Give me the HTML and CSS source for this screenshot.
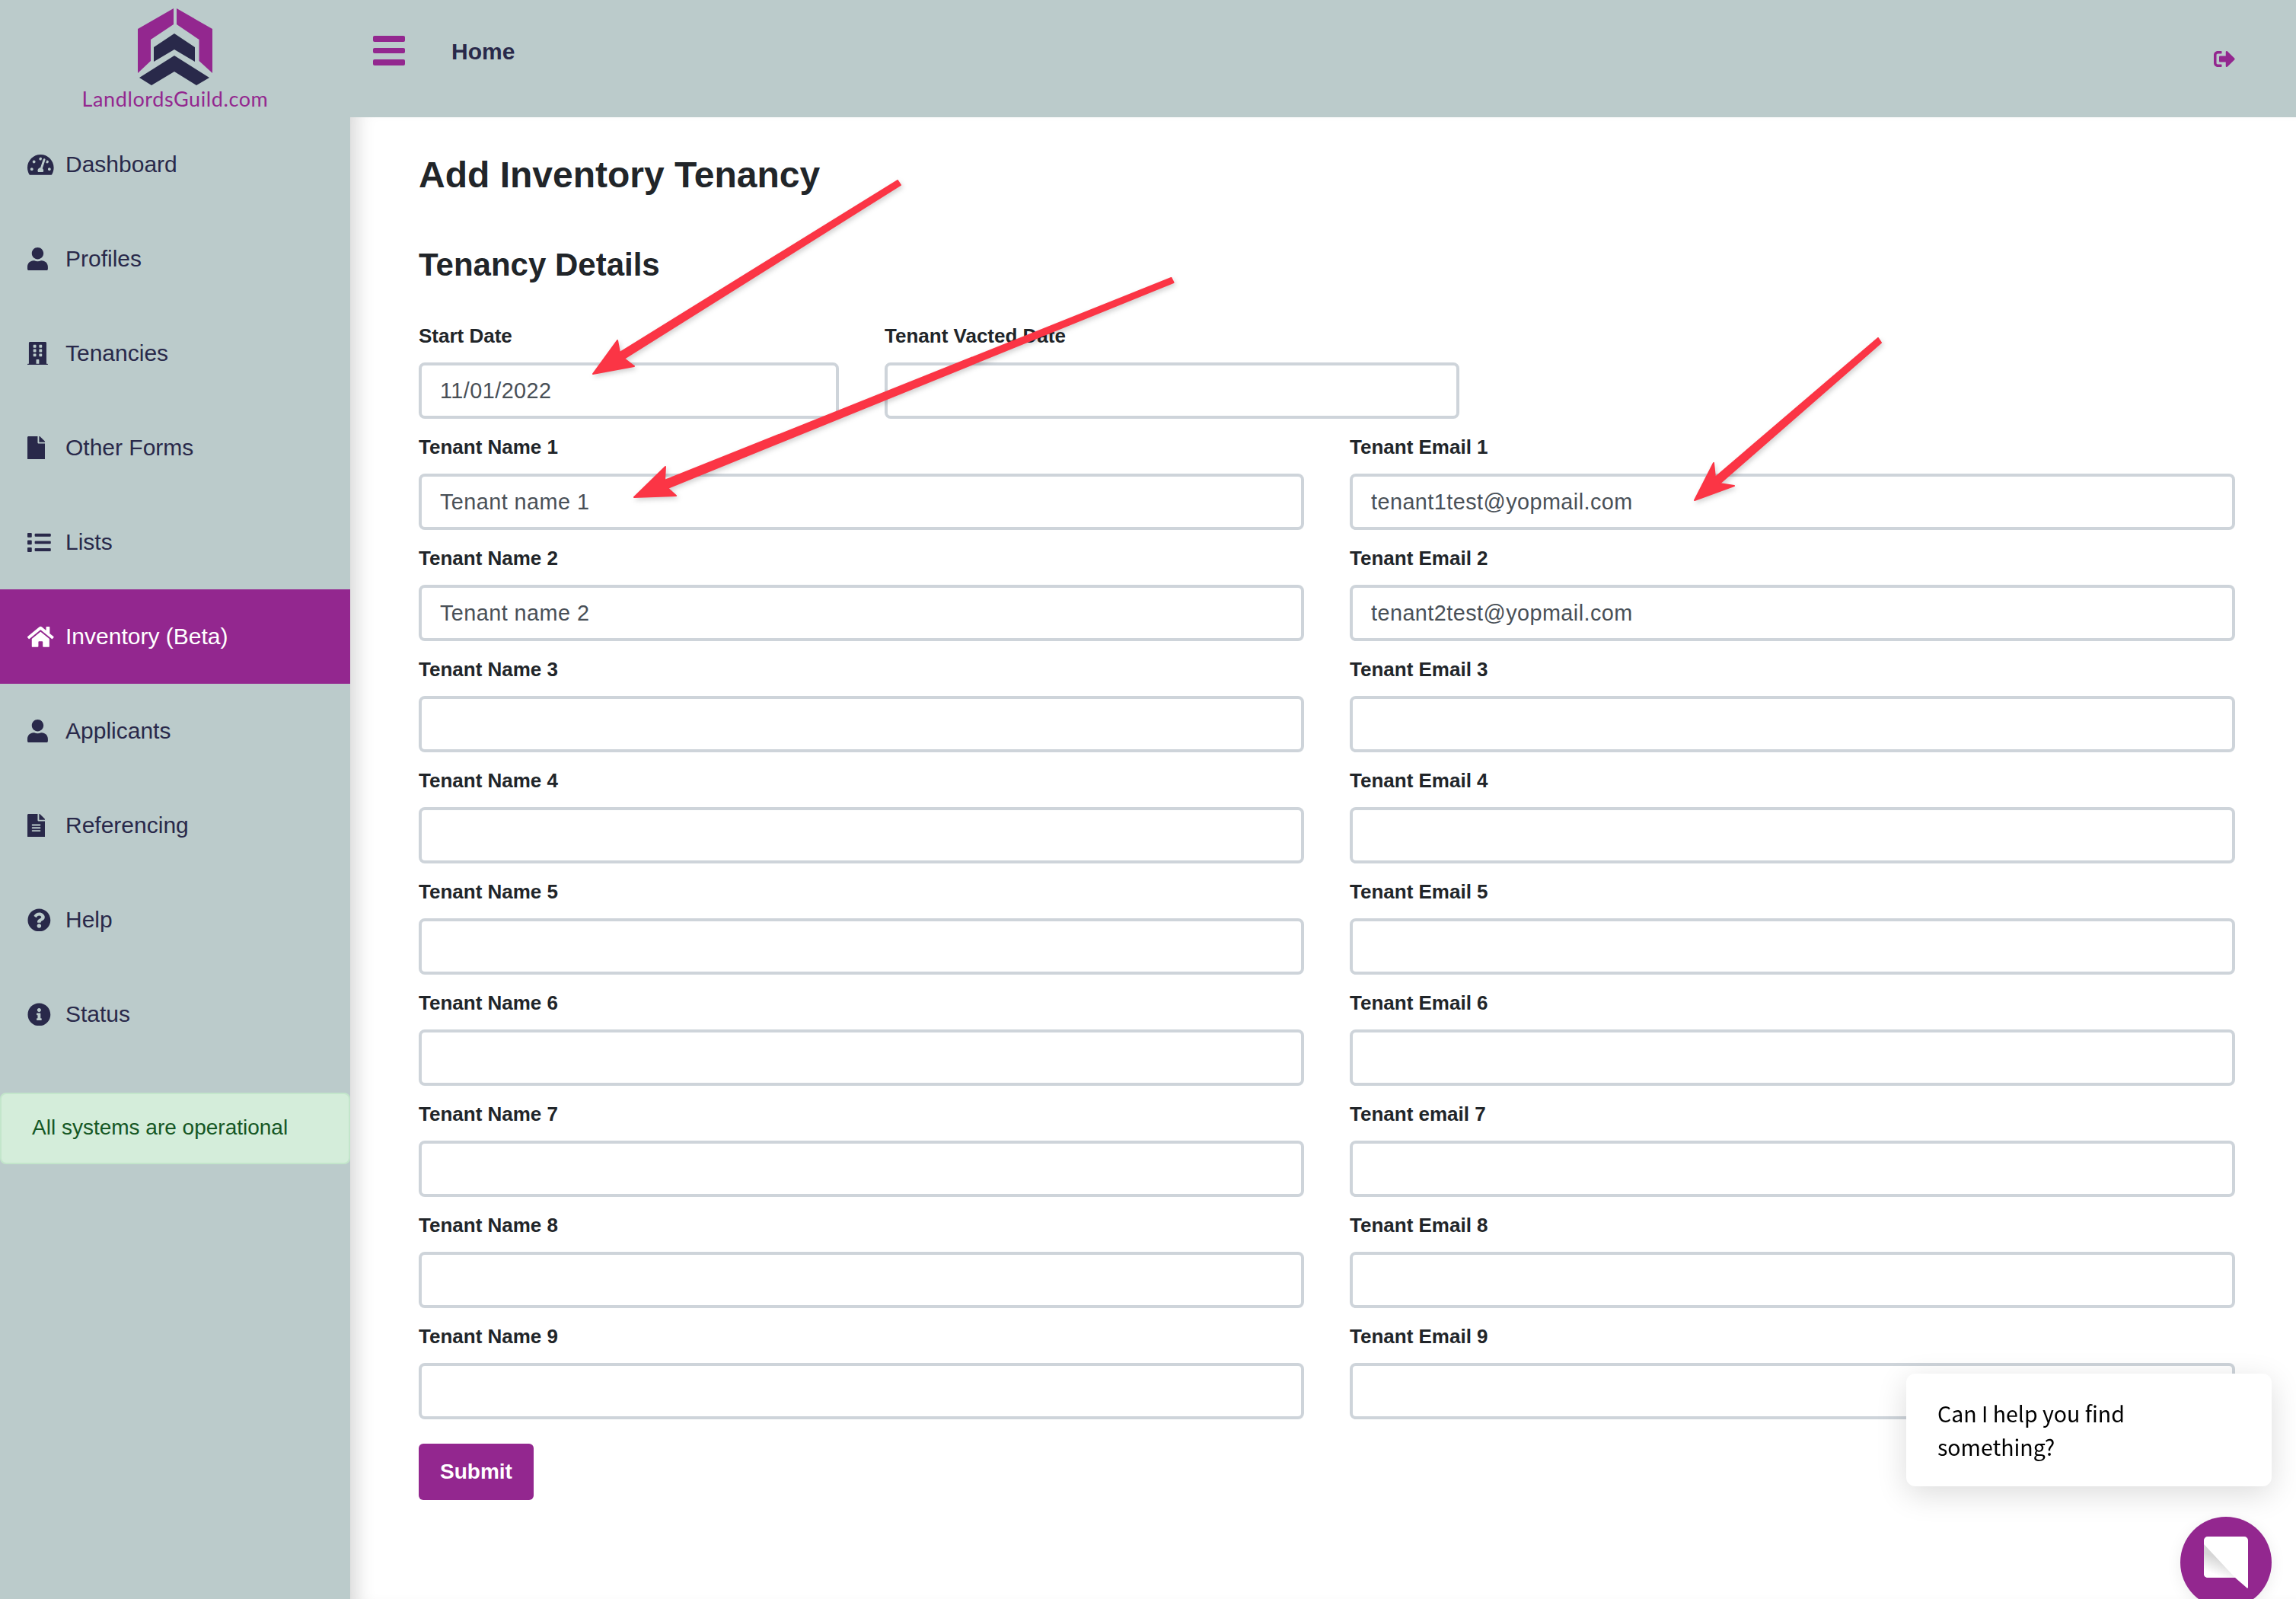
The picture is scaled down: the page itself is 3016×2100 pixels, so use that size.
FILE: index.html
```html
<!DOCTYPE html>
<html>
<head>
<meta charset="utf-8">
<title>Add Inventory Tenancy</title>
<link rel="stylesheet" href="styles.css">
</head>
<body>
<div class="app">

<aside class="sidebar">
  <div class="logo">
    <svg class="logo-mark" viewBox="182 11 98 101">
      <polygon class="purple" points="229,11 229,32 199,52 199,80 182,96 182,38"/>
      <polygon class="purple" points="233,11 233,32 262.5,52 262.5,80 280,96 280,38"/>
      <polygon class="navy" points="230,44 257,62 257,81 230,65 203,81 203,62"/>
      <polygon class="navy" points="230,73 276,102 259,112 230,94 200,112 184,102"/>
    </svg>
    <div class="logo-text">LandlordsGuild.com</div>
  </div>

  <nav class="nav">
    <a class="nav-item"><span class="nav-icon"><svg viewBox="0 0 576 512"><path d="M288 32C128.94 32 0 160.94 0 320c0 52.8 14.25 102.26 39.06 144.8 5.61 9.62 16.3 15.2 27.44 15.2h443c11.14 0 21.83-5.58 27.44-15.2C561.75 422.26 576 372.8 576 320c0-159.06-128.94-288-288-288zm0 64c14.71 0 26.58 10.13 30.32 23.65-1.11 2.26-2.64 4.23-3.45 6.67l-9.22 27.67c-5.13 3.49-10.97 6.01-17.64 6.01-17.67 0-32-14.33-32-32S270.33 96 288 96zM96 384c-17.67 0-32-14.33-32-32s14.33-32 32-32 32 14.33 32 32-14.33 32-32 32zm48-160c-17.67 0-32-14.33-32-32s14.33-32 32-32 32 14.33 32 32-14.33 32-32 32zm246.77-72.41l-61.33 184C343.13 347.33 352 364.54 352 384c0 11.72-3.38 22.55-8.88 32H232.88c-5.5-9.45-8.88-20.28-8.88-32 0-33.94 26.5-61.43 59.9-63.59l61.34-184.01c4.17-12.56 17.73-19.45 30.36-15.17 12.57 4.19 19.35 17.79 15.17 30.36zm14.66 57.2l15.52-46.55c3.47-1.29 7.13-2.23 11.05-2.23 17.67 0 32 14.33 32 32s-14.33 32-32 32c-11.38-.01-20.89-6.28-26.57-15.22zM480 384c-17.67 0-32-14.33-32-32s14.33-32 32-32 32 14.33 32 32-14.33 32-32 32z"/></svg></span>Dashboard</a>
    <a class="nav-item"><span class="nav-icon"><svg viewBox="0 0 448 512"><path d="M224 256c70.7 0 128-57.3 128-128S294.7 0 224 0 96 57.3 96 128s57.3 128 128 128zm89.6 32h-16.7c-22.2 10.2-46.9 16-72.9 16s-50.6-5.8-72.9-16h-16.7C60.2 288 0 348.2 0 422.4V464c0 26.5 21.5 48 48 48h352c26.5 0 48-21.5 48-48v-41.6c0-74.2-60.2-134.4-134.4-134.4z"/></svg></span>Profiles</a>
    <a class="nav-item"><span class="nav-icon"><svg viewBox="0 0 448 512"><path d="M436 480h-20V24c0-13.255-10.745-24-24-24H56C42.745 0 32 10.745 32 24v456H12c-6.627 0-12 5.373-12 12v20h448v-20c0-6.627-5.373-12-12-12zM128 76c0-6.627 5.373-12 12-12h40c6.627 0 12 5.373 12 12v40c0 6.627-5.373 12-12 12h-40c-6.627 0-12-5.373-12-12V76zm0 96c0-6.627 5.373-12 12-12h40c6.627 0 12 5.373 12 12v40c0 6.627-5.373 12-12 12h-40c-6.627 0-12-5.373-12-12v-40zm52 148h-40c-6.627 0-12-5.373-12-12v-40c0-6.627 5.373-12 12-12h40c6.627 0 12 5.373 12 12v40c0 6.627-5.373 12-12 12zm76 160h-64v-84c0-6.627 5.373-12 12-12h40c6.627 0 12 5.373 12 12v84zm64-172c0 6.627-5.373 12-12 12h-40c-6.627 0-12-5.373-12-12v-40c0-6.627 5.373-12 12-12h40c6.627 0 12 5.373 12 12v40zm0-96c0 6.627-5.373 12-12 12h-40c-6.627 0-12-5.373-12-12v-40c0-6.627 5.373-12 12-12h40c6.627 0 12 5.373 12 12v40zm0-96c0 6.627-5.373 12-12 12h-40c-6.627 0-12-5.373-12-12V76c0-6.627 5.373-12 12-12h40c6.627 0 12 5.373 12 12v40z"/></svg></span>Tenancies</a>
    <a class="nav-item"><span class="nav-icon"><svg viewBox="0 0 384 512"><path d="M224 136V0H24C10.7 0 0 10.7 0 24v464c0 13.3 10.7 24 24 24h336c13.3 0 24-10.7 24-24V160H248c-13.2 0-24-10.8-24-24zm160-14.1v6.1H256V0h6.1c6.4 0 12.5 2.5 17 7l97.9 98c4.5 4.5 7 10.6 7 16.9z"/></svg></span>Other Forms</a>
    <a class="nav-item"><span class="nav-icon"><svg viewBox="0 0 512 512"><path d="M80 368H16a16 16 0 0 0-16 16v64a16 16 0 0 0 16 16h64a16 16 0 0 0 16-16v-64a16 16 0 0 0-16-16zm0-320H16A16 16 0 0 0 0 64v64a16 16 0 0 0 16 16h64a16 16 0 0 0 16-16V64a16 16 0 0 0-16-16zm0 160H16a16 16 0 0 0-16 16v64a16 16 0 0 0 16 16h64a16 16 0 0 0 16-16v-64a16 16 0 0 0-16-16zm416 176H176a16 16 0 0 0-16 16v32a16 16 0 0 0 16 16h320a16 16 0 0 0 16-16v-32a16 16 0 0 0-16-16zm0-320H176a16 16 0 0 0-16 16v32a16 16 0 0 0 16 16h320a16 16 0 0 0 16-16V80a16 16 0 0 0-16-16zm0 160H176a16 16 0 0 0-16 16v32a16 16 0 0 0 16 16h320a16 16 0 0 0 16-16v-32a16 16 0 0 0-16-16z"/></svg></span>Lists</a>
    <a class="nav-item active"><span class="nav-icon"><svg viewBox="0 0 576 512"><path d="M280.37 148.26L96 300.11V464a16 16 0 0 0 16 16l112.06-.29a16 16 0 0 0 15.92-16V368a16 16 0 0 1 16-16h64a16 16 0 0 1 16 16v95.64a16 16 0 0 0 16 16.05L464 480a16 16 0 0 0 16-16V300L295.67 148.26a12.19 12.19 0 0 0-15.3 0zM571.6 251.47L488 182.56V44.05a12 12 0 0 0-12-12h-56a12 12 0 0 0-12 12v72.61L318.47 43a48 48 0 0 0-61 0L4.34 251.47a12 12 0 0 0-1.6 16.9l25.5 31A12 12 0 0 0 45.15 301l235.22-193.74a12.19 12.19 0 0 1 15.3 0L530.9 301a12 12 0 0 0 16.9-1.6l25.5-31a12 12 0 0 0-1.7-16.93z"/></svg></span>Inventory (Beta)</a>
    <a class="nav-item"><span class="nav-icon"><svg viewBox="0 0 448 512"><path d="M224 256c70.7 0 128-57.3 128-128S294.7 0 224 0 96 57.3 96 128s57.3 128 128 128zm89.6 32h-16.7c-22.2 10.2-46.9 16-72.9 16s-50.6-5.8-72.9-16h-16.7C60.2 288 0 348.2 0 422.4V464c0 26.5 21.5 48 48 48h352c26.5 0 48-21.5 48-48v-41.6c0-74.2-60.2-134.4-134.4-134.4z"/></svg></span>Applicants</a>
    <a class="nav-item"><span class="nav-icon"><svg viewBox="0 0 384 512"><path d="M224 136V0H24C10.7 0 0 10.7 0 24v464c0 13.3 10.7 24 24 24h336c13.3 0 24-10.7 24-24V160H248c-13.2 0-24-10.8-24-24zm64 236c0 6.6-5.4 12-12 12H108c-6.6 0-12-5.4-12-12v-8c0-6.6 5.4-12 12-12h168c6.6 0 12 5.4 12 12v8zm0-64c0 6.6-5.4 12-12 12H108c-6.6 0-12-5.4-12-12v-8c0-6.6 5.4-12 12-12h168c6.6 0 12 5.4 12 12v8zm0-72v8c0 6.6-5.4 12-12 12H108c-6.6 0-12-5.4-12-12v-8c0-6.6 5.4-12 12-12h168c6.6 0 12 5.4 12 12zm96-114.1v6.1H256V0h6.1c6.4 0 12.5 2.5 17 7l97.9 98c4.5 4.5 7 10.6 7 16.9z"/></svg></span>Referencing</a>
    <a class="nav-item"><span class="nav-icon"><svg viewBox="0 0 512 512"><path d="M504 256c0 136.997-111.043 248-248 248S8 392.997 8 256C8 119.083 119.043 8 256 8s248 111.083 248 248zM262.655 90c-54.497 0-89.255 22.957-116.549 63.758-3.536 5.286-2.353 12.415 2.715 16.258l34.699 26.31c5.205 3.947 12.621 3.008 16.665-2.122 17.864-22.658 30.113-35.797 57.303-35.797 20.429 0 45.698 13.148 45.698 32.958 0 14.976-12.363 22.667-32.534 33.976C247.128 238.528 216 254.941 216 296v4c0 6.627 5.373 12 12 12h56c6.627 0 12-5.373 12-12v-1.333c0-28.462 83.186-29.647 83.186-106.667 0-58.002-60.165-102-116.531-102zM256 338c-25.365 0-46 20.635-46 46 0 25.364 20.635 46 46 46s46-20.636 46-46c0-25.365-20.635-46-46-46z"/></svg></span>Help</a>
    <a class="nav-item"><span class="nav-icon"><svg viewBox="0 0 512 512"><path d="M256 8C119.043 8 8 119.083 8 256c0 136.997 111.043 248 248 248s248-111.003 248-248C504 119.083 392.957 8 256 8zm0 110c23.196 0 42 18.804 42 42s-18.804 42-42 42-42-18.804-42-42 18.804-42 42-42zm56 254c0 6.627-5.373 12-12 12h-88c-6.627 0-12-5.373-12-12v-24c0-6.627 5.373-12 12-12h12v-64h-12c-6.627 0-12-5.373-12-12v-24c0-6.627 5.373-12 12-12h64c6.627 0 12 5.373 12 12v100h12c6.627 0 12 5.373 12 12v24z"/></svg></span>Status</a>
  </nav>

  <div class="status-ok">All systems are operational</div>
</aside>

<div class="right">
  <header class="topbar">
    <div class="burger"><span></span><span></span><span></span></div>
    <div class="crumb">Home</div>
    <svg class="logout" viewBox="0 64 512 384"><path d="M497 273L329 441c-15 15-41 4.5-41-17v-96H152c-13.3 0-24-10.7-24-24v-96c0-13.3 10.7-24 24-24h136V88c0-21.4 25.9-32 41-17l168 168c9.3 9.4 9.3 24.6 0 34zM192 436v-40c0-6.6-5.4-12-12-12H96c-17.7 0-32-14.3-32-32V160c0-17.7 14.3-32 32-32h84c6.6 0 12-5.4 12-12V76c0-6.6-5.4-12-12-12H96c-53 0-96 43-96 96v192c0 53 43 96 96 96h84c6.6 0 12-5.4 12-12z"/></svg>
  </header>

  <main class="content">
    <h1>Add Inventory Tenancy</h1>
    <h2>Tenancy Details</h2>

    <form>
      <div class="row-dates">
        <div class="field"><label>Start Date</label><input type="text" value="11/01/2022"></div>
        <div class="field"><label>Tenant Vacted Date</label><input type="text"></div>
      </div>
      <div class="row-tenants">
        <div class="field"><label>Tenant Name 1</label><input type="text" value="Tenant name 1"></div>
        <div class="field"><label>Tenant Email 1</label><input type="text" value="tenant1test@yopmail.com"></div>
        <div class="field"><label>Tenant Name 2</label><input type="text" value="Tenant name 2"></div>
        <div class="field"><label>Tenant Email 2</label><input type="text" value="tenant2test@yopmail.com"></div>
        <div class="field"><label>Tenant Name 3</label><input type="text"></div>
        <div class="field"><label>Tenant Email 3</label><input type="text"></div>
        <div class="field"><label>Tenant Name 4</label><input type="text"></div>
        <div class="field"><label>Tenant Email 4</label><input type="text"></div>
        <div class="field"><label>Tenant Name 5</label><input type="text"></div>
        <div class="field"><label>Tenant Email 5</label><input type="text"></div>
        <div class="field"><label>Tenant Name 6</label><input type="text"></div>
        <div class="field"><label>Tenant Email 6</label><input type="text"></div>
        <div class="field"><label>Tenant Name 7</label><input type="text"></div>
        <div class="field"><label>Tenant email 7</label><input type="text"></div>
        <div class="field"><label>Tenant Name 8</label><input type="text"></div>
        <div class="field"><label>Tenant Email 8</label><input type="text"></div>
        <div class="field"><label>Tenant Name 9</label><input type="text"></div>
        <div class="field"><label>Tenant Email 9</label><input type="text"></div>
      </div>
      <button class="submit" type="button">Submit</button>
    </form>
  </main>
</div>

</div>

<!-- red annotation arrows drawn over the screenshot -->
<svg class="arrows" viewBox="0 0 3016 2100">
  <polygon points="1183,243 820,471 833,481 779,491 811,447 814,463 1179,237"/>
  <polygon points="1541.5,371 877,641 888,651 833,653 874,613 873,631 1538.5,365"/>
  <polygon points="2471,450 2259,635 2278,638 2226,657 2251,608 2253,627 2467,444"/>
</svg>

<div class="chat-card">Can I help you find something?</div>
<div class="chat-btn">
  <svg viewBox="0 0 120 120">
    <defs>
      <linearGradient id="fold" gradientUnits="userSpaceOnUse" x1="44" y1="52" x2="36" y2="72">
        <stop offset="0" stop-color="#d6d6d6"/>
        <stop offset="1" stop-color="#ffffff"/>
      </linearGradient>
    </defs>
    <path fill="#fff" d="M36 26H84a5 5 0 0 1 5 5V92.500a1 1 0 0 1-2 .6L72 80H36a5 5 0 0 1-5-5V31a5 5 0 0 1 5-5z"/>
    <path fill="url(#fold)" d="M31 36L72 80H36a5 5 0 0 1-5-5z"/>
  </svg>
</div>

</body>
</html>
```

FILE: styles.css
```css
html, body { margin: 0; height: 100%; overflow: hidden; }
body { font-family: "Liberation Sans", Arial, sans-serif; color: #212529; background: #fff; }
svg { display: block; }

.app { display: flex; height: 2100px; }

/* sidebar */
.sidebar { width: 460px; flex: none; background: #bbcbcb; }
.logo { height: 154px; display: flex; flex-direction: column; align-items: center; padding-top: 11px; box-sizing: border-box; }
.logo-mark { width: 98px; height: 101px; }
.purple { fill: #93278f; }
.navy { fill: #29294a; }
.logo-text { font-family: "Lato", sans-serif; font-size: 27px; line-height: 36px; color: #93278f; letter-spacing: 0.6px; }

.nav-item { height: 124px; display: flex; align-items: center; padding-left: 36px; font-size: 30px; color: #29294a; }
.nav-item.active { background: #93278f; color: #fff; }
.nav-icon { width: 50px; flex: none; }
.nav-icon svg { height: 30.77px; width: auto; fill: currentColor; }

.status-ok { margin-top: 41px; height: 94px; box-sizing: border-box; padding-left: 40px; line-height: 88px;
  background: #d4edda; border: 2px solid #c3e6cb; border-radius: 8px; color: #155724; font-size: 28px; }

/* header */
.right { flex: 1; display: flex; flex-direction: column; min-width: 0; }
.topbar { height: 154px; flex: none; background: #bbcbcb; display: flex; align-items: flex-start; padding-left: 30px; position: relative; }
.burger { width: 42px; margin-top: 47px; display: flex; flex-direction: column; gap: 8px; }
.burger span { height: 7.500px; background: #93278f; border-radius: 2px; }
.crumb { margin-left: 61px; margin-top: 50px; font-size: 30px; line-height: 36px; font-weight: bold; color: #29294a; }
.logout { width: 28px; height: 21px; fill: #93278f; margin-left: auto; margin-right: 80px; margin-top: 67px; }

/* form */
.content { flex: 1; padding: 44px 80px 0 90px; box-shadow: inset 26px 0 24px -18px rgba(0, 0, 0, .16); }
h1 { margin: 0 0 58px; font-size: 48px; line-height: 64px; font-weight: bold; }
h2 { margin: 0 0 49px; font-size: 42px; line-height: 56px; font-weight: bold; }

.row-dates { display: grid; grid-template-columns: 552px 755px; column-gap: 60px; }
.row-tenants { display: grid; grid-template-columns: 1163px 1163px; column-gap: 60px; }
.field { margin-bottom: 21px; }
.field label { display: block; margin-bottom: 19px; font-size: 26px; line-height: 32px; font-weight: bold; color: #212529; }
.field input { display: block; width: 100%; height: 74px; box-sizing: border-box; padding: 0 24px; border: 4px solid #ced4da;
  border-radius: 8px; background: #fff; font-family: "Liberation Sans", Arial, sans-serif; font-size: 28.8px; letter-spacing: 0.45px; color: #495057; outline: none; }

.submit { display: block; width: 151px; height: 74px; margin-top: 11px; padding: 0; border: 0; border-radius: 6px; background: #93278f;
  color: #fff; font-family: "Liberation Sans", Arial, sans-serif; font-size: 28px; font-weight: bold; }

/* arrows + chat overlay */
.arrows { position: fixed; left: 0; top: 0; width: 3016px; height: 2100px; pointer-events: none; }
.arrows polygon { fill: #fb3545; stroke: #fb3545; stroke-width: 2; stroke-linejoin: round; filter: drop-shadow(2px 3px 3px rgba(0, 0, 0, .18)); }

.chat-card { position: fixed; left: 2504px; top: 1804px; width: 480px; height: 148px; box-sizing: border-box; padding: 30px 120px 0 41px;
  background: #fff; border-radius: 12px; box-shadow: 0 10px 40px rgba(0, 0, 0, .14);
  font-family: "Noto Sans CJK SC", "Noto Sans", sans-serif; font-size: 28.5px; line-height: 44px; color: #000; }
.chat-btn { position: fixed; left: 2864px; top: 1992px; width: 120px; height: 120px; border-radius: 50%; background: #93278f; box-shadow: 0 4px 20px rgba(0, 0, 0, .08); }
```
